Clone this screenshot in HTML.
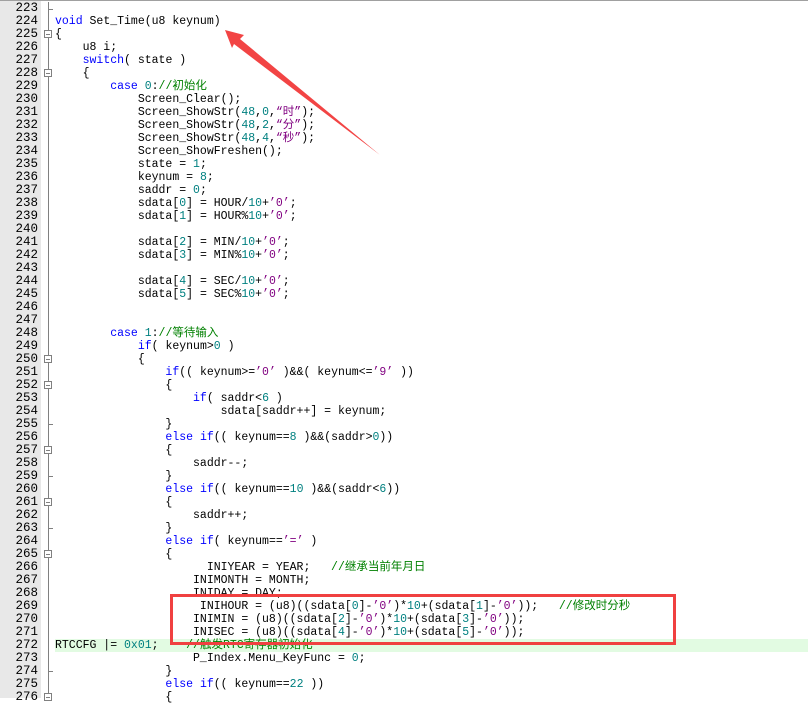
<!DOCTYPE html>
<html><head><meta charset="utf-8"><style>
body{margin:0;width:808px;height:698px;overflow:hidden;background:#fff;position:relative;font-family:"Liberation Mono","Noto Sans CJK SC",monospace;}
#gut{position:absolute;left:0;top:0;width:41px;height:698px;background:#e8e8e8;}
#topbar{position:absolute;left:0;top:0;width:808px;height:1px;background:#a0a0a0;}
#vline{position:absolute;left:48px;top:2px;width:1px;height:696px;background:#808080;}
.hl{position:absolute;left:55px;top:639px;width:753px;height:13px;background:#e2fbe2;}
#nums{position:absolute;left:0;top:2px;width:38px;text-align:right;font-size:12.5px;line-height:13px;color:#000;white-space:pre;}
#code{position:absolute;left:55px;top:2px;font-size:11.5px;line-height:13px;white-space:pre;color:#000;}
.k{color:#0000ff}.n{color:#008080}.s{color:#800080}.c{color:#008000}
.fb{position:absolute;left:44px;width:8px;height:8px;border:1px solid #808080;background:#fff;box-sizing:border-box;}
.fb:after{content:"";position:absolute;left:1px;top:3px;width:4px;height:1px;background:#808080;}
.tk{position:absolute;left:48px;width:5px;height:1px;background:#808080;}
</style></head><body>
<div id="gut"></div><div id="topbar"></div>
<div class="hl"></div>
<div id="vline"></div>
<div class="tk" style="top:9px;"></div>
<div class="fb" style="top:30px"></div>
<div class="fb" style="top:69px"></div>
<div class="fb" style="top:355px"></div>
<div class="fb" style="top:381px"></div>
<div class="tk" style="top:424px"></div>
<div class="fb" style="top:446px"></div>
<div class="tk" style="top:476px"></div>
<div class="fb" style="top:498px"></div>
<div class="tk" style="top:528px"></div>
<div class="fb" style="top:550px"></div>
<div class="tk" style="top:671px"></div>
<div class="fb" style="top:693px"></div>
<div id="nums">223
224
225
226
227
228
229
230
231
232
233
234
235
236
237
238
239
240
241
242
243
244
245
246
247
248
249
250
251
252
253
254
255
256
257
258
259
260
261
262
263
264
265
266
267
268
269
270
271
272
273
274
275
276</div>
<div id="code">
<span class="k">void</span> Set_Time(u8 keynum)
{
    u8 i;
    <span class="k">switch</span>( state )
    {
        <span class="k">case</span> <span class="n">0</span>:<span class="c">//初始化</span>
            Screen_Clear();
            Screen_ShowStr(<span class="n">48</span>,<span class="n">0</span>,<span class="s">“时”</span>);
            Screen_ShowStr(<span class="n">48</span>,<span class="n">2</span>,<span class="s">“分”</span>);
            Screen_ShowStr(<span class="n">48</span>,<span class="n">4</span>,<span class="s">“秒”</span>);
            Screen_ShowFreshen();
            state = <span class="n">1</span>;
            keynum = <span class="n">8</span>;
            saddr = <span class="n">0</span>;
            sdata[<span class="n">0</span>] = HOUR/<span class="n">10</span>+<span class="s">’0’</span>;
            sdata[<span class="n">1</span>] = HOUR%<span class="n">10</span>+<span class="s">’0’</span>;

            sdata[<span class="n">2</span>] = MIN/<span class="n">10</span>+<span class="s">’0’</span>;
            sdata[<span class="n">3</span>] = MIN%<span class="n">10</span>+<span class="s">’0’</span>;

            sdata[<span class="n">4</span>] = SEC/<span class="n">10</span>+<span class="s">’0’</span>;
            sdata[<span class="n">5</span>] = SEC%<span class="n">10</span>+<span class="s">’0’</span>;


        <span class="k">case</span> <span class="n">1</span>:<span class="c">//等待输入</span>
            <span class="k">if</span>( keynum&gt;<span class="n">0</span> )
            {
                <span class="k">if</span>(( keynum&gt;=<span class="s">’0’</span> )&amp;&amp;( keynum&lt;=<span class="s">’9’</span> ))
                {
                    <span class="k">if</span>( saddr&lt;<span class="n">6</span> )
                        sdata[saddr++] = keynum;
                }
                <span class="k">else</span> <span class="k">if</span>(( keynum==<span class="n">8</span> )&amp;&amp;(saddr&gt;<span class="n">0</span>))
                {
                    saddr--;
                }
                <span class="k">else</span> <span class="k">if</span>(( keynum==<span class="n">10</span> )&amp;&amp;(saddr&lt;<span class="n">6</span>))
                {
                    saddr++;
                }
                <span class="k">else</span> <span class="k">if</span>( keynum==<span class="s">’=’</span> )
                {
                      INIYEAR = YEAR;   <span class="c">//继承当前年月日</span>
                    INIMONTH = MONTH;
                    INIDAY = DAY;
                     INIHOUR = (u8)((sdata[<span class="n">0</span>]-<span class="s">’0’</span>)*<span class="n">10</span>+(sdata[<span class="n">1</span>]-<span class="s">’0’</span>));   <span class="c">//修改时分秒</span>
                    INIMIN = (u8)((sdata[<span class="n">2</span>]-<span class="s">’0’</span>)*<span class="n">10</span>+(sdata[<span class="n">3</span>]-<span class="s">’0’</span>));
                    INISEC = (u8)((sdata[<span class="n">4</span>]-<span class="s">’0’</span>)*<span class="n">10</span>+(sdata[<span class="n">5</span>]-<span class="s">’0’</span>));
RTCCFG |= <span class="n">0x01</span>;    <span class="c">//触发RTC寄存器初始化</span>
                    P_Index.Menu_KeyFunc = <span class="n">0</span>;
                }
                <span class="k">else</span> <span class="k">if</span>(( keynum==<span class="n">22</span> ))
                {</div>
<svg style="position:absolute;left:0;top:0" width="808" height="698">
<rect x="171.5" y="595.5" width="503" height="48" fill="none" stroke="#f04040" stroke-width="3"/>
<polygon points="225,30 244,35 240,39 380,155 234,44 232,48" fill="#f24444"/>
</svg>
</body></html>
